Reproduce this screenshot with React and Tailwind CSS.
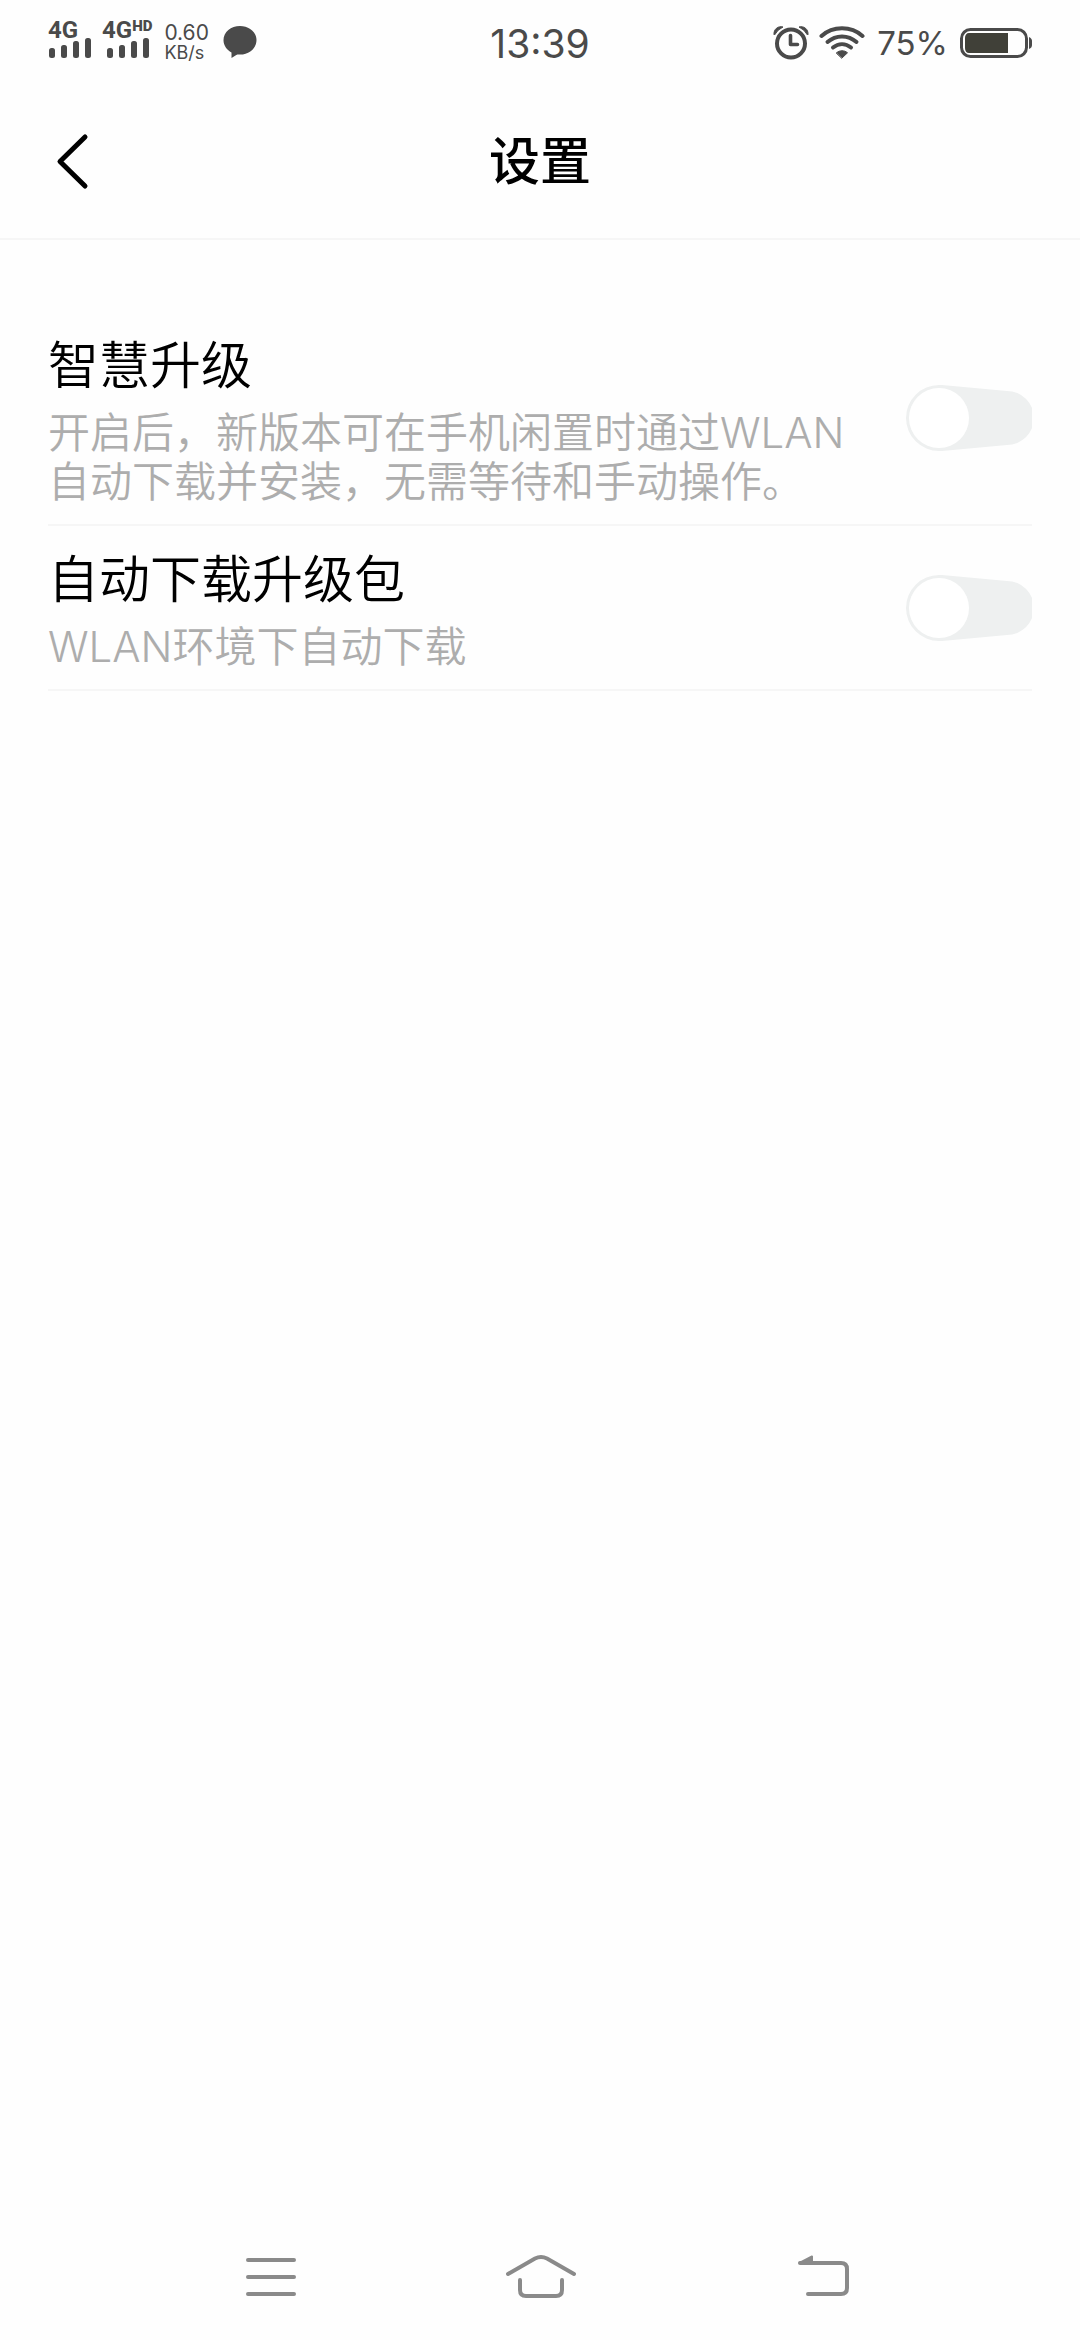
import { useState } from 'react'
import clsx from 'clsx'

const SETTINGS = [
  {
    id: 'smart-upgrade',
    title: '智慧升级',
    description: '开启后，新版本可在手机闲置时通过WLAN自动下载并安装，无需等待和手动操作。',
  },
  {
    id: 'auto-download',
    title: '自动下载升级包',
    description: 'WLAN环境下自动下载',
  },
]

function Signal({ hd }) {
  return (
    <div className="flex flex-col pb-2.5">
      <div className="flex items-start font-['Roboto',sans-serif] font-bold">
        <span className="text-[24px] leading-6">4G</span>
        {hd && <span className="text-[15px] leading-4 font-black">HD</span>}
      </div>
      <svg
        width="46"
        height="20"
        viewBox="0 0 46 20"
        fill="currentColor"
        className={clsx('-mt-1', hd && 'ml-1')}
        aria-hidden="true"
      >
        <rect x="1" y="10" width="6" height="10" rx="2.5" />
        <rect x="13" y="7" width="6" height="13" rx="2.5" />
        <rect x="25" y="3" width="6" height="17" rx="2.5" />
        <rect x="37" y="0" width="6" height="20" rx="2.5" />
      </svg>
    </div>
  )
}

function StatusBar() {
  return (
    <div className="grid h-[86px] grid-cols-[1fr_auto_1fr] items-center px-12 font-['Inter','Roboto',sans-serif] text-[#4a4a4a]">
      <div className="flex items-center">
        <Signal />
        <div className="ml-2">
          <Signal hd />
        </div>
        <div className="ml-3 flex flex-col">
          <span className="text-[21px] leading-5">0.60</span>
          <span className="text-[18px] leading-5">KB/s</span>
        </div>
        <svg width="34" height="34" viewBox="0 0 34 34" fill="currentColor" className="ml-3.5" aria-hidden="true">
          <path d="M17 0C26 0 33.5 6 33.5 14S26.500 28.500 17 28.500C15.500 28.500 14.500 28.300 13.300 29L8.500 32V26.500C4 24 .5 19.500 .5 14.200C.5 6 8 0 17 0Z" />
        </svg>
      </div>

      <span className="text-[39px] leading-none">13:39</span>

      <div className="flex items-center justify-end">
        {/* Alarm */}
        <svg width="36" height="36" viewBox="0 0 36 36" fill="none" stroke="currentColor" aria-hidden="true">
          <circle cx="18" cy="18.500" r="14" strokeWidth="4" />
          <path d="M17.500 10.500V19.500H24.500" strokeWidth="3.600" strokeLinecap="round" strokeLinejoin="round" />
          <path d="M1 9.500C.5 4.500 5 .5 10 2Q4.500 4.500 1.500 10Z" fill="currentColor" strokeWidth="1" />
          <path d="M35 9.500C35.500 4.500 31 .5 26 2Q31.500 4.500 34.500 10Z" fill="currentColor" strokeWidth="1" />
        </svg>
        {/* Wi-Fi */}
        <svg
          width="46"
          height="34"
          viewBox="0 0 46 34"
          fill="none"
          stroke="currentColor"
          strokeWidth="4"
          strokeLinecap="round"
          className="ml-2.5"
          aria-hidden="true"
        >
          <path d="M2.500 10C14 -.2 32 -.2 43.500 10" />
          <path d="M8.500 16C17 8.500 29 8.500 37.500 16" />
          <path d="M14 21.500C19.500 17 26.500 17 32 21.500" />
          <path d="M17.500 26.800C20.500 24 25.500 24 28.500 26.800L23 32Z" fill="currentColor" strokeWidth="1" />
        </svg>
        <span className="ml-3 text-[33px] leading-none">75%</span>
        {/* Battery */}
        <svg width="72" height="30" viewBox="0 0 72 30" fill="none" className="ml-3" aria-hidden="true">
          <rect x="1.500" y="1.500" width="65" height="27" rx="9" stroke="currentColor" strokeWidth="3" />
          <path d="M9 5H48V25H9C6.500 25 5 23 5 20V10C5 7 6.500 5 9 5Z" fill="#404038" />
          <path d="M69 9C71 10 72 11 72 13V17C72 19 71 20 69 21Z" fill="currentColor" />
        </svg>
      </div>
    </div>
  )
}

function Header() {
  return (
    <header className="grid h-[154px] grid-cols-[1fr_auto_1fr] items-center border-b-2 border-[#f6f6f6] px-12">
      <button type="button" aria-label="返回" className="justify-self-start">
        <svg
          width="48"
          height="60"
          viewBox="0 0 48 60"
          fill="none"
          stroke="currentColor"
          strokeWidth="5"
          strokeLinecap="round"
          strokeLinejoin="round"
        >
          <path d="M37 5L12 29.500L37 54" />
        </svg>
      </button>
      <h1 className="text-[51px] leading-[60px] font-medium">设置</h1>
    </header>
  )
}

function Toggle({ id, checked, onChange }) {
  return (
    <span className="relative shrink-0">
      <input
        id={id}
        type="checkbox"
        checked={checked}
        onChange={onChange}
        aria-describedby={`${id}-description`}
        className="absolute inset-0 size-full cursor-pointer opacity-0"
      />
      <svg
        width="126"
        height="66"
        viewBox="0 0 126 66"
        className={clsx('block', checked ? '-scale-x-100 text-[#456fff]' : 'text-[#eef0f0]')}
        aria-hidden="true"
      >
        <path d="M33 0H36L101 6A27 27 0 0 1 101 60L36 66H33A33 33 0 0 1 33 0Z" fill="currentColor" />
        <circle cx="33" cy="33" r="30" fill="#ffffff" />
      </svg>
    </span>
  )
}

function SettingRow({ id, title, description }) {
  const [checked, setChecked] = useState(false)

  return (
    <li className="flex items-center gap-7 border-b-2 border-[#f6f6f6] py-[18px]">
      <div className="min-w-0 flex-1 pt-1.5">
        <label htmlFor={id} className="block text-[51px] leading-[60px] font-[350]">
          {title}
        </label>
        <p id={`${id}-description`} className="mt-3 text-[42px] leading-[49px] font-[350] text-[#adadad]">
          {description}
        </p>
      </div>
      <Toggle id={id} checked={checked} onChange={(e) => setChecked(e.target.checked)} />
    </li>
  )
}

function NavBar() {
  return (
    <nav className="flex h-32 items-center justify-center text-[#8a8a8a]">
      <div className="flex w-3/4">
        <button type="button" aria-label="最近任务" className="flex flex-1 justify-center">
          <svg width="80" height="60" viewBox="0 0 80 60" fill="none" stroke="currentColor" strokeWidth="4" strokeLinecap="round">
            <path d="M18 14H64M18 31H64M18 48H64" />
          </svg>
        </button>
        <button type="button" aria-label="主屏幕" className="flex flex-1 justify-center">
          <svg width="80" height="60" viewBox="0 0 80 60" fill="none" stroke="currentColor" strokeWidth="4" strokeLinecap="round">
            <path d="M8 28L35 12.500Q41 9.500 47 12.500L74 28" />
            <path d="M20 34V44Q20 50 26 50H56Q62 50 62 44V34" />
          </svg>
        </button>
        <button type="button" aria-label="返回上一页" className="flex flex-1 justify-center">
          <svg
            width="80"
            height="60"
            viewBox="0 0 80 60"
            fill="none"
            stroke="currentColor"
            strokeWidth="4"
            strokeLinecap="round"
            className="overflow-visible"
          >
            <path d="M30 17H71Q77 17 77 23V42Q77 48 71 48H38" />
            <path d="M29.500 17L42 10.500V17Z" fill="currentColor" strokeWidth="2" strokeLinejoin="round" />
          </svg>
        </button>
      </div>
    </nav>
  )
}

export default function App() {
  return (
    <div className="flex min-h-screen flex-col bg-[#fefefe] font-['Inter','Noto_Sans_CJK_SC',sans-serif] text-black">
      <StatusBar />
      <Header />
      <main className="flex-1 px-12 pt-[72px]">
        <ul>
          {SETTINGS.map((item) => (
            <SettingRow key={item.id} {...item} />
          ))}
        </ul>
      </main>
      <NavBar />
    </div>
  )
}
